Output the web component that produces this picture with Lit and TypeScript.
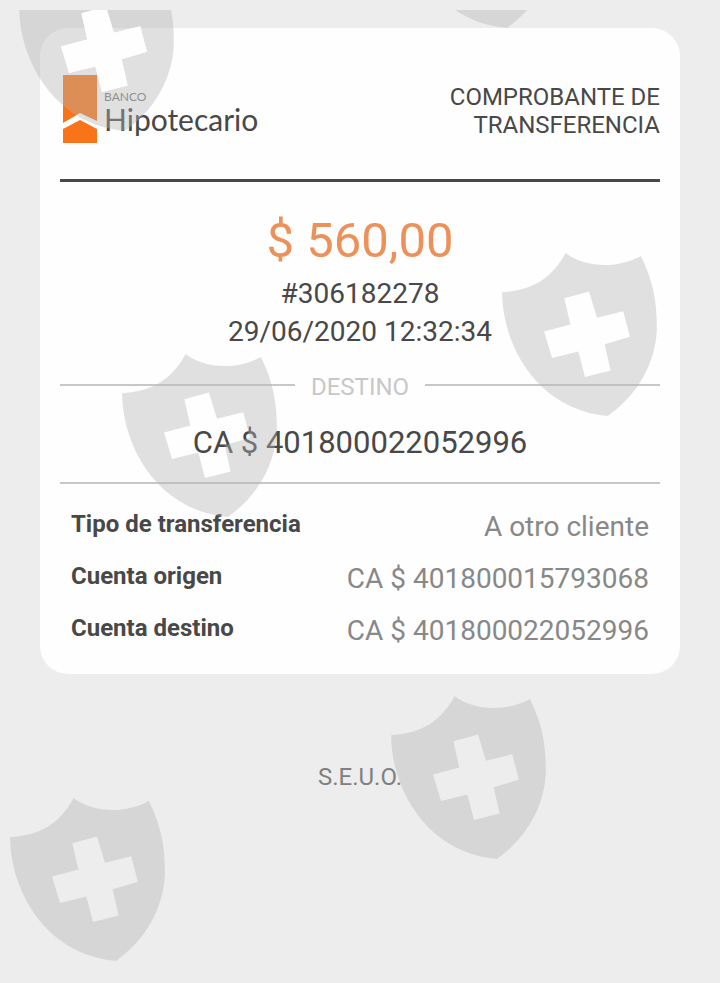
import { LitElement, html, css, svg } from "lit";
import { customElement, property } from "lit/decorators.js";
import { styleMap } from "lit/directives/style-map.js";

const CROSS =
  "187,136 261,116 285,195 364,175 384,252 308,274 326,353 249,373 229,296 150,316 126,236 205,215";

@customElement("shield-mark")
class ShieldMark extends LitElement {
  @property({ type: Boolean }) filled = false;

  static styles = css`
    :host {
      display: block;
      width: 156px;
      height: 163px;
    }
    .shield {
      display: block;
      width: 100%;
      height: 100%;
    }
  `;

  render() {
    return html`
      <svg class="shield" viewBox="0 0 468 490" aria-hidden="true">
        <path
          fill="#b3b3b3"
          fill-opacity="0.4"
          fill-rule="evenodd"
          d="M0 118C75 112 140 92 191 0C240 40 340 52 417 9C455 85 465 150 465 222C465 300 430 410 318 490C100 470 0 270 0 118ZM${CROSS}Z"
        />
        ${this.filled ? svg`<polygon fill="#fefefe" points=${CROSS} />` : null}
      </svg>
    `;
  }
}

@customElement("bank-logo")
class BankLogo extends LitElement {
  static styles = css`
    :host {
      display: flex;
      align-items: flex-end;
      gap: 6px;
      color: #484848;
      font-family: Lato, sans-serif;
    }
    .ribbon {
      display: block;
      width: 36px;
      height: 68px;
    }
    .words {
      display: flex;
      flex-direction: column;
      padding-bottom: 8px;
    }
    .small {
      font-size: 12px;
      line-height: 12px;
      color: #777;
    }
    .big {
      font-size: 30px;
      line-height: 32px;
    }
  `;

  render() {
    return html`
      <svg class="ribbon" viewBox="0 0 36 68" aria-hidden="true">
        <path fill="#f97318" d="M1 0H35V46L18 38L1 48Z" />
        <path fill="#f97318" d="M1 54L18 45L35 54V68H1Z" />
      </svg>
      <div class="words">
        <span class="small">BANCO</span>
        <span class="big">Hipotecario</span>
      </div>
    `;
  }
}

@customElement("app-root")
class AppRoot extends LitElement {
  private shields = [
    { left: 19, top: -42, filled: true },
    { left: 401, top: -145, filled: false },
    { left: 502, top: 243, filled: false },
    { left: 122, top: 344, filled: false },
    { left: 391, top: 686, filled: false },
    { left: 10, top: 788, filled: false },
  ];

  private details = [
    ["Tipo de transferencia", "A otro cliente"],
    ["Cuenta origen", "CA $ 401800015793068"],
    ["Cuenta destino", "CA $ 401800022052996"],
  ];

  static styles = css`
    :host {
      display: block;
      position: relative;
      box-sizing: border-box;
      min-height: 100vh;
      padding: 28px 40px;
      background: #ededed;
      color: #484848;
      font-family: Roboto, sans-serif;
    }
    .card {
      padding: 47px 20px 17px;
      border-radius: 28px;
      background: #fefefe;
    }
    .head {
      display: flex;
      align-items: flex-end;
      justify-content: space-between;
      padding: 0 0 36px 2px;
      border-bottom: 3px solid #484848;
    }
    .title {
      margin: 0;
      padding-bottom: 4px;
      font-size: 24px;
      line-height: 28px;
      font-weight: 400;
      text-align: right;
    }
    .summary {
      padding: 31px 0 22px;
      text-align: center;
      font-size: 28px;
      line-height: 38px;
    }
    .summary p {
      margin: 0;
    }
    .summary .amount {
      margin-bottom: 6px;
      color: #ec9159;
      font-size: 49px;
      line-height: 56px;
    }
    .divider {
      display: flex;
      align-items: flex-start;
      gap: 16px;
      margin: 0;
      color: #c8c8c8;
      font-size: 24px;
      line-height: 28px;
      font-weight: 400;
    }
    .divider::before,
    .divider::after {
      content: "";
      flex: 1;
      height: 2px;
      margin-top: 11px;
      background: #c8c8c8;
    }
    .account {
      margin: 0;
      padding: 24px 0 21px;
      border-bottom: 2px solid #c8c8c8;
      text-align: center;
      font-size: 31px;
      line-height: 36px;
    }
    .details {
      margin: 17px 0 0;
      padding: 0 11px;
    }
    .row {
      display: flex;
      align-items: flex-start;
      justify-content: space-between;
      padding: 9px 0;
    }
    .row dt {
      font-size: 24px;
      line-height: 28px;
      font-weight: 700;
    }
    .row dd {
      margin: 0;
      color: #888;
      font-size: 28px;
      line-height: 34px;
    }
    .note {
      margin: 89px 0 0;
      color: #808080;
      font-size: 24px;
      line-height: 28px;
      text-align: center;
    }
    .marks {
      position: absolute;
      inset: 10px 0 0;
      overflow: hidden;
      pointer-events: none;
    }
    .mark {
      position: absolute;
    }
  `;

  render() {
    return html`
      <main class="card">
        <header class="head">
          <bank-logo></bank-logo>
          <h1 class="title">COMPROBANTE DE<br />TRANSFERENCIA</h1>
        </header>
        <section class="summary">
          <p class="amount">$ 560,00</p>
          <p>#306182278</p>
          <p>29/06/2020 12:32:34</p>
        </section>
        <h2 class="divider">DESTINO</h2>
        <p class="account">CA $ 401800022052996</p>
        <dl class="details">
          ${this.details.map(
            ([label, value]) => html`<div class="row"><dt>${label}</dt><dd>${value}</dd></div>`
          )}
        </dl>
      </main>
      <p class="note">S.E.U.O.</p>
      <div class="marks">
        ${this.shields.map(
          (s) => html`<shield-mark
            class="mark"
            ?filled=${s.filled}
            style=${styleMap({ left: `${s.left}px`, top: `${s.top}px` })}
          ></shield-mark>`
        )}
      </div>
    `;
  }
}
